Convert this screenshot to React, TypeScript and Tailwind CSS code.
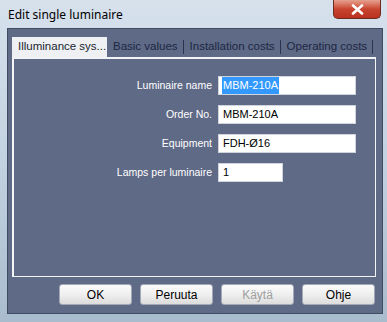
import React from 'react';

const tabs = ['Basic values', 'Installation costs', 'Operating costs'];

const fields = [
  { label: 'Luminaire name', value: 'MBM-210A', selected: true, short: false },
  { label: 'Order No.', value: 'MBM-210A', selected: false, short: false },
  { label: 'Equipment', value: 'FDH-Ø16', selected: false, short: false },
  { label: 'Lamps per luminaire', value: '1', selected: false, short: true },
];

const buttons = [
  { text: 'OK', disabled: false },
  { text: 'Peruuta', disabled: false },
  { text: 'Käytä', disabled: true },
  { text: 'Ohje', disabled: false },
];

export default function App() {
  return (
    <div className="w-[387px] h-[322px] overflow-hidden flex flex-col bg-gradient-to-b from-[#d6e1ec] via-[#c3d2e1] to-[#a9bccd] font-['Liberation_Sans',sans-serif]">
      {/* title bar */}
      <div className="h-[28px] flex items-start justify-between pl-[8px] pr-[6px]">
        <span className="mt-[6px] text-[12px] text-black font-['Noto_Sans',sans-serif]">
          Edit single luminaire
        </span>
        <div className="w-[48px] h-[19px] rounded-b-[5px] border border-t-0 border-[#6b2a22] bg-gradient-to-b from-[#e5a08f] via-[#c9452f] to-[#b8321f] flex items-center justify-center">
          <svg width="13" height="11" viewBox="0 0 13 11">
            <path d="M2 1.5 L11 9.5 M11 1.5 L2 9.5" stroke="#fff" strokeWidth="2.6" strokeLinecap="round" />
          </svg>
        </div>
      </div>

      {/* client area */}
      <div className="ml-[7px] mr-[4px] h-[286px] border border-[#3f4a63] bg-[#5f6a87] flex flex-col pl-[4px] pr-[6px]">
        {/* tabs */}
        <div className="flex items-end h-[28px] whitespace-nowrap text-[11.5px] text-[#1c2742]">
          <div className="h-[20px] w-[95px] bg-[#eef0f4] flex items-center pl-[6px] text-[#1a1f2e]">
            Illuminance sys...
          </div>
          {tabs.map((t) => (
            <div key={t} className="h-[20px] flex items-center pl-[6px]">
              <span>{t}</span>
              <span className="ml-[5px] w-px h-[14px] bg-[#2a3450]" />
            </div>
          ))}
        </div>

        {/* panel */}
        <div className="h-[220px] border-2 border-[#f2f4f8] border-r border-b flex flex-col pt-[17px] gap-[10px] text-[10.5px]">
          {fields.map((f) => (
            <div key={f.label} className="flex items-center h-[19px]">
              <span className="w-[204px] text-right text-white pr-[6px]">{f.label}</span>
              <div
                className={`h-[19px] bg-white border border-[#d0d4dc] flex items-center pl-[3px] text-black text-[11px] ${
                  f.short ? 'w-[65px]' : 'w-[138px]'
                }`}
              >
                {f.selected ? (
                  <span className="bg-[#3399ff] text-white px-[1px]">{f.value}</span>
                ) : (
                  <span className="px-[1px]">{f.value}</span>
                )}
              </div>
            </div>
          ))}
        </div>

        {/* buttons */}
        <div className="flex justify-end gap-[8px] mt-[7px] pr-[1px]">
          {buttons.map((b) => (
            <div
              key={b.text}
              className={`w-[73px] h-[21px] rounded-[3px] border border-[#a3a9b6] bg-gradient-to-b from-[#fbfbfb] via-[#efefef] to-[#dcdcdc] flex items-center justify-center text-[12px] ${
                b.disabled ? 'text-[#a0a0a0]' : 'text-black'
              }`}
            >
              {b.text}
            </div>
          ))}
        </div>
      </div>
    </div>
  );
}
